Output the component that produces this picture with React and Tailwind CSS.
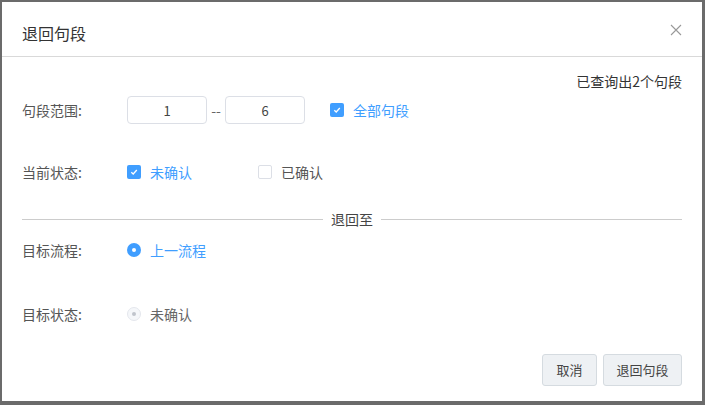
import { useState } from "react";

// small blue checkbox used in the form rows
function Check({ checked, label, onClick }) {
  return (
    <button type="button" onClick={onClick} className="flex items-center gap-[9px]">
      <span
        className={
          checked
            ? "w-[14px] h-[14px] rounded-[2px] bg-[#409eff] flex items-center justify-center"
            : "w-[14px] h-[14px] rounded-[2px] border border-[#dcdfe6] bg-white"
        }
      >
        {checked && (
          <svg width="10" height="10" viewBox="0 0 10 10">
            <path d="M2.3 5.2 L4.2 7 L7.8 3" fill="none" stroke="#fff" strokeWidth="1.3" />
          </svg>
        )}
      </span>
      <span className={checked ? "text-[#409eff]" : "text-[#555]"}>{label}</span>
    </button>
  );
}

// radio button, disabled variant is greyed out
function Radio({ label, disabled }) {
  if (disabled) {
    return (
      <div className="flex items-center gap-[9px]">
        <span className="w-[14px] h-[14px] rounded-full border border-[#e4e7ed] bg-[#f5f7fa] flex items-center justify-center">
          <span className="w-[4px] h-[4px] rounded-full bg-[#c0c4cc]" />
        </span>
        <span className="text-[#666]">{label}</span>
      </div>
    );
  }
  return (
    <div className="flex items-center gap-[9px]">
      <span className="w-[14px] h-[14px] rounded-full bg-[#409eff] flex items-center justify-center">
        <span className="w-[4px] h-[4px] rounded-full bg-white" />
      </span>
      <span className="text-[#409eff]">{label}</span>
    </div>
  );
}

function Row({ label, children, className }) {
  return (
    <div className={"flex items-center h-[28px] " + className}>
      <div className="w-[105px] text-[#555]">{label}</div>
      {children}
    </div>
  );
}

export default function App() {
  const [all, setAll] = useState(true);
  const [unconfirmed, setUnconfirmed] = useState(true);
  const [confirmed, setConfirmed] = useState(false);

  return (
    <div
      className="w-[705px] h-[405px] bg-[#6b6b6b] pt-[2px] pl-[2px] text-[14px]"
      style={{ fontFamily: '"Noto Sans CJK SC", "Noto Sans", sans-serif' }}
    >
      <div className="w-[700px] h-[399px] bg-white flex flex-col">
        {/* header */}
        <div className="h-[55px] border-b border-[#d9d9d9] flex items-center justify-between pl-[20px] pr-[20px] pt-[7px]">
          <h3 className="text-[16px] text-[#333]">退回句段</h3>
          <svg width="12" height="12" viewBox="0 0 12 12" className="mt-[-6px]">
            <path d="M1 1 L11 11 M11 1 L1 11" stroke="#999" strokeWidth="1.1" />
          </svg>
        </div>

        {/* body */}
        <div className="flex flex-col px-[20px]">
          <div className="h-[20px] mt-[14px] flex items-center justify-end text-[#333]">已查询出2个句段</div>

          <Row label="句段范围:" className="mt-[5px]">
            <input
              defaultValue="1"
              className="w-[80px] h-[28px] border border-[#dcdfe6] rounded-[4px] text-center text-[13px] text-[#444] outline-none"
            />
            <span className="w-[18px] text-center text-[#666]">--</span>
            <input
              defaultValue="6"
              className="w-[80px] h-[28px] border border-[#dcdfe6] rounded-[4px] text-center text-[13px] text-[#444] outline-none"
            />
            <div className="ml-[25px]">
              <Check checked={all} label="全部句段" onClick={() => setAll(!all)} />
            </div>
          </Row>

          <Row label="当前状态:" className="mt-[34px]">
            <div className="w-[131px]">
              <Check checked={unconfirmed} label="未确认" onClick={() => setUnconfirmed(!unconfirmed)} />
            </div>
            <Check checked={confirmed} label="已确认" onClick={() => setConfirmed(!confirmed)} />
          </Row>

          {/* divider with caption */}
          <div className="h-[20px] mt-[23px] flex items-center gap-[8px]">
            <div className="flex-1 h-px bg-[#ccc]" />
            <span className="text-[#444] text-[14px]">退回至</span>
            <div className="flex-1 h-px bg-[#ccc]" />
          </div>

          <Row label="目标流程:" className="mt-[7px]">
            <Radio label="上一流程" />
          </Row>

          <Row label="目标状态:" className="mt-[36px]">
            <Radio label="未确认" disabled />
          </Row>

          <div className="flex justify-end gap-[6px] mt-[26px]">
            <button className="w-[55px] h-[32px] rounded-[3px] border border-[#d5dbe0] bg-[#eef1f4] text-[13px] text-[#444]">
              取消
            </button>
            <button className="w-[79px] h-[32px] rounded-[3px] border border-[#d5dbe0] bg-[#eef1f4] text-[13px] text-[#444]">
              退回句段
            </button>
          </div>
        </div>
      </div>
    </div>
  );
}
